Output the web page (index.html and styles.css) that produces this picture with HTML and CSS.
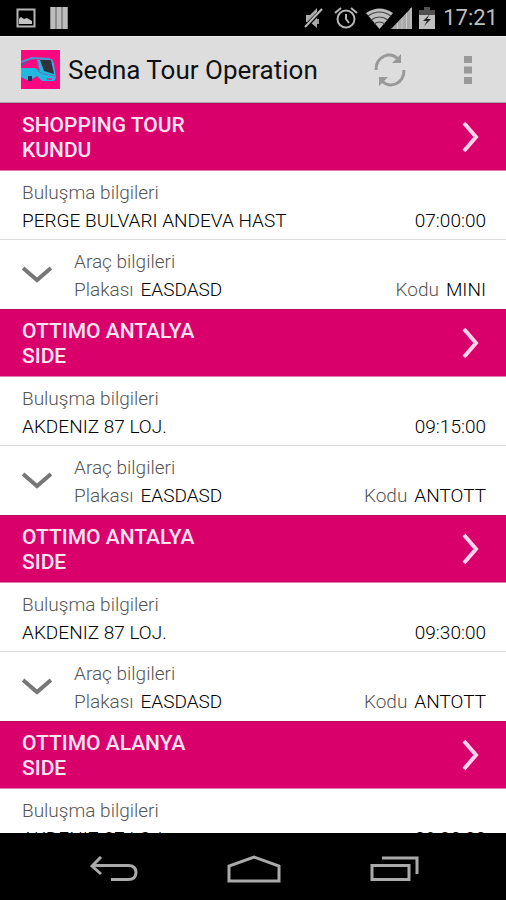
FILE: index.html
```html
<!DOCTYPE html>
<html lang="tr">
<head>
<meta charset="utf-8">
<meta name="viewport" content="width=device-width, initial-scale=1">
<title>Sedna Tour Operation</title>
<link rel="stylesheet" href="styles.css">
</head>
<body>
<svg class="defs" aria-hidden="true">
  <symbol id="next" viewBox="0 0 18 32"><path d="M2 2 14 16 2 30" fill="none" stroke="#ffd3e8" stroke-width="4"/></symbol>
  <symbol id="expand" viewBox="0 0 30 18"><path d="M1 2 15 14 29 2" fill="none" stroke="#777" stroke-width="4"/></symbol>
</svg>
<div class="screen">
  <div class="status">
    <svg class="status-icon" width="20" height="20" viewBox="0 0 20 20"><path d="M1.500 1.500h17v17h-17z" fill="none" stroke="#b5b5b5" stroke-width="2"/><path d="M3 16v-5l2-2 3 2 3-1 5 3v3z" fill="#c4c4c4"/></svg>
    <svg class="status-bars" width="18" height="22" viewBox="0 0 18 22"><path d="M0 0h18v22H0z" fill="#8d8d8d"/><path d="M1 0h4v22H1zM7 0h4v22H7zM13 0h4v22h-4z" fill="#bdbdbd"/></svg>
    <div class="system">
      <svg width="20" height="22" viewBox="0 0 20 22"><path d="M2 8h4l7-7v20l-7-6H2z" fill="#aaa"/><path d="M14 5v4M14 12v5" stroke="#999" stroke-width="2"/><path d="M1 20 19 2" stroke="#000" stroke-width="4"/><path d="M1 20 18 2" stroke="#bbb" stroke-width="2"/></svg>
      <svg class="alarm" width="24" height="22" viewBox="0 0 24 22"><g fill="none" stroke="#b5b5b5" stroke-width="2"><circle cx="12" cy="12" r="8.500"/><path d="M12 7v5l3 4M1 6l6-5M23 6l-6-5"/></g></svg>
      <svg class="wifi" width="27" height="21" viewBox="0 0 27 21"><path d="M0 5Q13.500-4 27 5L13.500 21z" fill="#bdbdbd"/><path d="M2 8Q13.500 0 25 8M5 12q8.500-6 17 0M8 16q5.500-4 11 0" fill="none" stroke="#444" stroke-width="1.200"/></svg>
      <svg class="signal" width="21" height="22" viewBox="0 0 21 22"><path d="M21 0v22H0z" fill="#a8a8a8"/><path d="M6.500 16v6M11 11v11M15.500 6v16M20 1v21" stroke="#c8c8c8"/></svg>
      <svg class="battery" width="16" height="22" viewBox="0 0 16 22"><path d="M5 0h6v3h5v5H0V3h5z" fill="#505050"/><path d="M0 8h16v14H0z" fill="#c0c0c0"/><path d="m11 7-7 7h4l-3 5 7-7H8z" fill="#222"/></svg>
      <span class="clock">17:21</span>
    </div>
  </div>

  <header class="bar">
    <svg class="logo" width="39" height="39" viewBox="0 0 39 39"><path d="M0 0h39v39H0z" fill="#ff087f"/><path d="M0 18h14l5 3-3-11 15-1 2 5 2 14-2 3H21l-5-5-5 3v2H8l-8-4z" fill="#20b8e0"/><path d="M0 12 11 8l18 1" fill="none" stroke="#3c9ed0" stroke-width="2"/><path d="M1 15 6 12" stroke="#5c57a5" stroke-width="2"/><path d="M19 10h11l3 14-10-3z" fill="#32323c"/><path d="M17 11v10l5 3 12 2" fill="none" stroke="#6175ad"/><path d="M7 26h4v5H7z" fill="#23325b"/><path d="M26 29h5" stroke="#c33e9b" stroke-width="2"/></svg>
    <h1 class="title">Sedna Tour Operation</h1>
    <button class="action refresh" aria-label="Yenile"><svg width="32" height="34" viewBox="0 0 32 34"><g fill="none" stroke="#999" stroke-width="3"><path d="M2 17C2 3 16-2 24 6"/><path d="M30 17C30 31 16 36 8 28"/></g><path d="M27 1v9h-9zM5 33v-9h9z" fill="#999"/></svg></button>
    <button class="action more" aria-label="Menü"><svg width="8" height="28" viewBox="0 0 8 28"><path d="M0 0h8v7H0zM0 10.500h8v7H0zM0 21h8v7H0z" fill="#999"/></svg></button>
  </header>

  <main class="list">
    <section class="tour">
      <a class="tour-head" href="#"><span class="name">SHOPPING TOUR<br>KUNDU</span><svg class="next"><use href="#next"/></svg></a>
      <div class="meeting">
        <p class="label">Buluşma bilgileri</p>
        <p class="row"><span>PERGE BULVARI ANDEVA HAST</span><time>07:00:00</time></p>
      </div>
      <div class="vehicle">
        <button class="expand" aria-label="Araç bilgilerini aç"><svg class="chevron"><use href="#expand"/></svg></button>
        <div class="details">
          <p class="label">Araç bilgileri</p>
          <p class="row"><span><span class="key">Plakası</span>EASDASD</span><span><span class="key">Kodu</span>MINI</span></p>
        </div>
      </div>
    </section>
    <section class="tour">
      <a class="tour-head" href="#"><span class="name">OTTIMO ANTALYA<br>SIDE</span><svg class="next"><use href="#next"/></svg></a>
      <div class="meeting">
        <p class="label">Buluşma bilgileri</p>
        <p class="row"><span>AKDENIZ 87 LOJ.</span><time>09:15:00</time></p>
      </div>
      <div class="vehicle">
        <button class="expand" aria-label="Araç bilgilerini aç"><svg class="chevron"><use href="#expand"/></svg></button>
        <div class="details">
          <p class="label">Araç bilgileri</p>
          <p class="row"><span><span class="key">Plakası</span>EASDASD</span><span><span class="key">Kodu</span>ANTOTT</span></p>
        </div>
      </div>
    </section>
    <section class="tour">
      <a class="tour-head" href="#"><span class="name">OTTIMO ANTALYA<br>SIDE</span><svg class="next"><use href="#next"/></svg></a>
      <div class="meeting">
        <p class="label">Buluşma bilgileri</p>
        <p class="row"><span>AKDENIZ 87 LOJ.</span><time>09:30:00</time></p>
      </div>
      <div class="vehicle">
        <button class="expand" aria-label="Araç bilgilerini aç"><svg class="chevron"><use href="#expand"/></svg></button>
        <div class="details">
          <p class="label">Araç bilgileri</p>
          <p class="row"><span><span class="key">Plakası</span>EASDASD</span><span><span class="key">Kodu</span>ANTOTT</span></p>
        </div>
      </div>
    </section>
    <section class="tour">
      <a class="tour-head" href="#"><span class="name">OTTIMO ALANYA<br>SIDE</span><svg class="next"><use href="#next"/></svg></a>
      <div class="meeting">
        <p class="label">Buluşma bilgileri</p>
        <p class="row"><span>AKDENIZ 87 LOJ.</span><time>09:30:00</time></p>
      </div>
    </section>
  </main>

  <nav class="nav">
    <button class="nav-key" aria-label="Geri"><svg width="48" height="26" viewBox="0 0 48 26"><path d="M11 1 2 10l9 8M2 9.500h36q8 0 8 7t-8 7H21" fill="none" stroke="#aaa" stroke-width="3"/></svg></button>
    <button class="nav-key" aria-label="Ana ekran"><svg width="54" height="28" viewBox="0 0 54 28"><path d="M2 26V11L27 2l25 9v15z" fill="none" stroke="#aaa" stroke-width="3"/></svg></button>
    <button class="nav-key" aria-label="Son uygulamalar"><svg width="50" height="26" viewBox="0 0 50 26"><path d="M2 9.500h37v14H2zM12 2h35v16" fill="none" stroke="#aaa" stroke-width="3"/></svg></button>
  </nav>
</div>
</body>
</html>
```
FILE: styles.css
```css
* { box-sizing: border-box; }

body {
  margin: 0;
  font-family: Roboto, "Noto Sans", sans-serif;
  background: #000;
}

h1, p { margin: 0; }

button {
  padding: 0;
  border: 0;
  background: none;
  display: flex;
  align-items: center;
  justify-content: center;
}

svg { display: block; flex: none; }

.defs { position: absolute; width: 0; height: 0; }

.screen {
  height: 100vh;
  display: flex;
  flex-direction: column;
}

.status {
  flex: none;
  height: 36px;
  padding: 0 8px 0 16px;
  display: flex;
  align-items: center;
  gap: 14px;
}

.system {
  margin-left: auto;
  display: flex;
  align-items: center;
}

.alarm { margin-left: 10px; }
.wifi { margin-left: 8px; }
.signal { margin-left: -2px; }
.battery { margin-left: 7px; }

.clock {
  margin-left: 8px;
  color: #bebebe;
  font-size: 22px;
  line-height: 38px;
}

.bar {
  flex: none;
  height: 67px;
  padding: 0 22px 0 21px;
  display: flex;
  align-items: center;
  background: #ddd;
  border-top: 1px solid #eee;
  border-bottom: 1px solid #b3a5ac;
}

.title {
  flex: 1;
  margin-left: 8px;
  color: #111;
  font-size: 26px;
  font-weight: 400;
  line-height: 32px;
}

.action { height: 48px; width: 32px; }
.more { margin-left: 46px; }

.list {
  flex: 1;
  min-height: 0;
  overflow: hidden;
  background: #fff;
}

.tour-head {
  height: 68px;
  padding: 0 26px 0 22px;
  display: flex;
  align-items: center;
  justify-content: space-between;
  background: #d9006c;
  border-top: 1px solid #c00762;
  border-bottom: 1px solid #e37fae;
  color: #ffe3f0;
  font-size: 21px;
  font-weight: 500;
  line-height: 25px;
  text-decoration: none;
}

.name { padding-top: 2px; }

.next { width: 18px; height: 32px; }

.meeting {
  height: 69px;
  padding: 8px 20px 0 22px;
  border-bottom: 1px solid #ddd;
}

.vehicle {
  height: 69px;
  padding: 8px 20px 0 22px;
  display: flex;
}

.expand {
  width: 30px;
  height: 54px;
}

.chevron { width: 30px; height: 18px; }

.details { flex: 1; margin-left: 22px; }

.label, .row {
  font-size: 19px;
  font-weight: 300;
  line-height: 28px;
}

.label, .key { color: #555; }

.row {
  display: flex;
  justify-content: space-between;
  color: #000;
}

.key { margin-right: 7px; }

.nav {
  flex: none;
  height: 67px;
  padding: 4px 41px 0 44px;
  display: grid;
  grid-template-columns: repeat(3, 1fr);
  background: #000;
}
```
